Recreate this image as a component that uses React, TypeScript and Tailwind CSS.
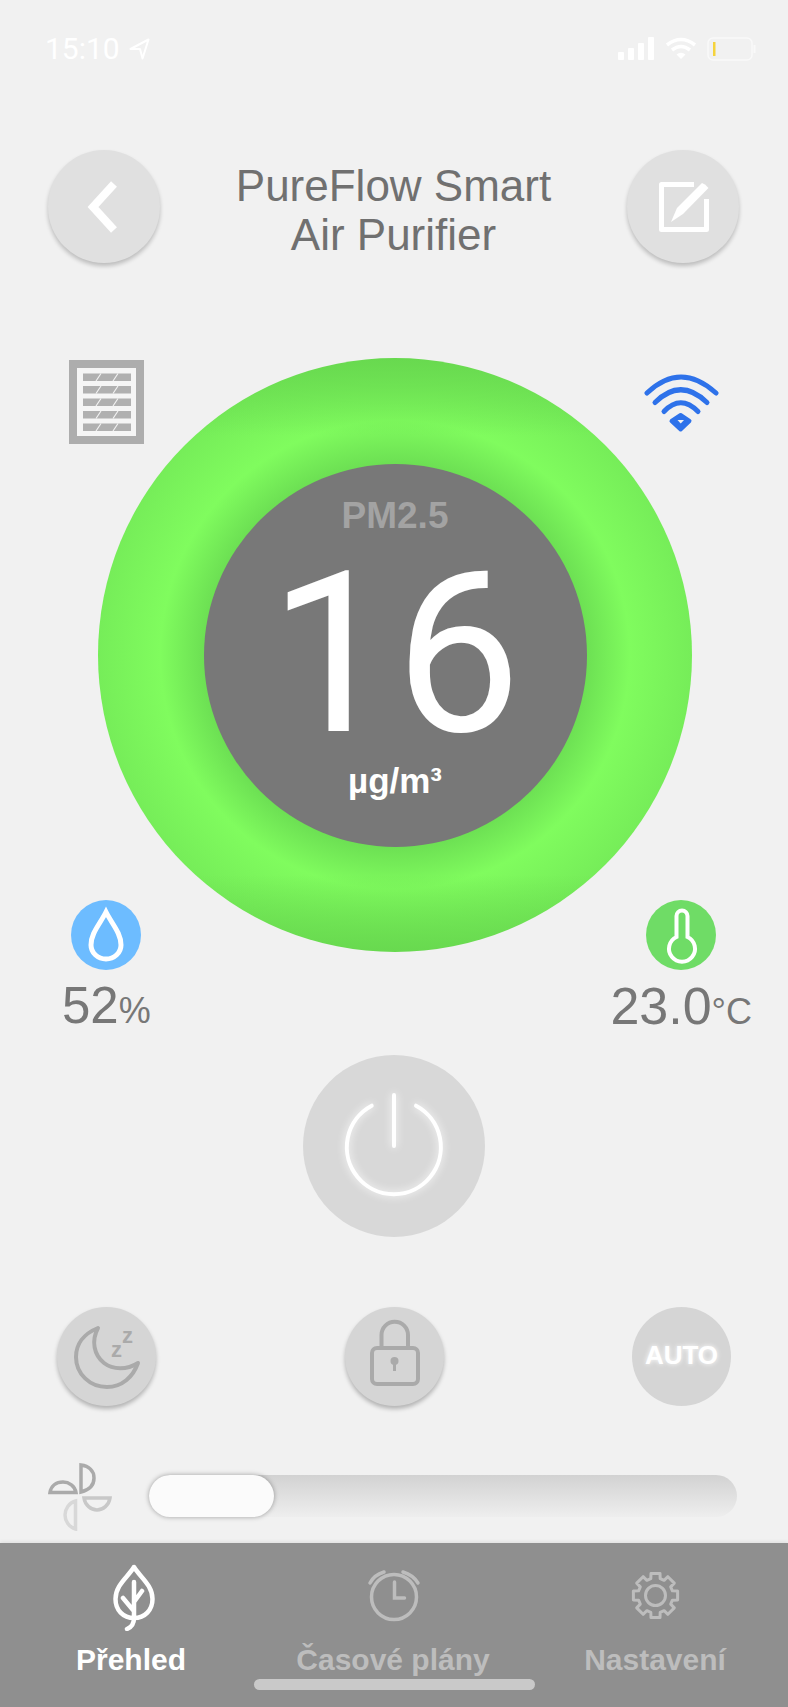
const gearPath = () => {
  const cx = 38.5
  const cy = 40.5
  const pts: string[] = []
  for (let i = 0; i < 8; i++) {
    const a = (i * Math.PI) / 4 - Math.PI / 2
    const step = 0.2
    const gap = 0.27
    const list: [number, number][] = [
      [17.5, a - gap],
      [22.5, a - step],
      [22.5, a + step],
      [17.5, a + gap],
    ]
    list.forEach(([r, t]) => pts.push(`${(cx + r * Math.cos(t)).toFixed(1)} ${(cy + r * Math.sin(t)).toFixed(1)}`))
  }
  return `M${pts.join(' L')} Z`
}

function FilterIcon() {
  const rows = [13.5, 26, 38.5, 51, 63.5]
  return (
    <svg width="75" height="84" viewBox="0 0 75 84">
      <rect x="4" y="4" width="67" height="76" fill="#f5f5f5" stroke="#adadad" strokeWidth="8" />
      {rows.map((y) => (
        <g key={y}>
          <rect x="14" y={y} width="48" height="7.5" fill="#b0b0b0" />
          <path d={`M27 ${y + 7.5} L32 ${y} M44 ${y + 7.5} L49 ${y}`} stroke="#f1f1f1" strokeWidth="1.2" />
        </g>
      ))}
    </svg>
  )
}

function WifiIcon() {
  return (
    <svg width="80" height="62" viewBox="20 22 80 62" fill="none" stroke="#2e72ea" strokeLinecap="round">
      <path d="M27 43 Q60.6 11 96 43" strokeWidth="5" />
      <path d="M35 52.5 Q60.6 27 87 52.5" strokeWidth="5" />
      <path d="M44 61.5 Q60.6 44 78 61.5" strokeWidth="5" />
      <path d="M60.6 65 L69.5 71 L60.6 79.5 L51.5 71 Z" fill="#2e72ea" strokeWidth="4" strokeLinejoin="round" />
      <path d="M57.5 70 H64 L60.7 73.5 Z" fill="#f1f1f1" stroke="none" />
    </svg>
  )
}

function NavLabel({ children, active }: { children: string; active?: boolean }) {
  return (
    <span className={`mt-[11px] block text-[30px] leading-[36px] font-bold ${active ? 'text-white' : 'text-[#bdbdbd]'}`}>
      {children}
    </span>
  )
}

export default function App() {
  return (
    <div className="relative flex h-[1707px] w-full flex-col overflow-hidden bg-[#f1f1f1] font-['Liberation_Sans',sans-serif]">
      {/* status bar */}
      <div className="flex h-[150px] items-start justify-between pt-[34px] pr-[31px] pl-[45px]">
        <div className="flex items-center gap-[9px] font-['Roboto',sans-serif] text-[30px] leading-[30px] text-white">
          <span>15:10</span>
          <svg width="21" height="22" viewBox="0 0 21 22" fill="none" stroke="#fff" strokeWidth="2" strokeLinejoin="round">
            <path d="M1.5 11 L19.5 1.5 L13.5 20.5 L11 11 Z" />
          </svg>
        </div>
        <div className="mt-[3px] flex items-start gap-[11px]">
          <svg width="36" height="23" viewBox="0 0 36 23" fill="#fff">
            <rect x="0" y="15" width="6" height="8" rx="1" />
            <rect x="10" y="11" width="6" height="12" rx="1" />
            <rect x="20" y="6" width="6" height="17" rx="1" />
            <rect x="30" y="0" width="6" height="23" rx="1" />
          </svg>
          <svg width="32" height="23" viewBox="0 0 32 23" fill="none" stroke="#fff" strokeWidth="3.5">
            <path d="M2 8 Q16 -3 30 8" />
            <path d="M7 13 Q16 6 25 13" />
            <path d="M16 22 L11.5 17.5 Q16 14 20.5 17.5 Z" fill="#fff" stroke="none" />
          </svg>
          <svg width="50" height="24" viewBox="0 0 50 24" fill="none" className="ml-[-1px]">
            <rect x="1" y="1" width="44" height="22" rx="5" stroke="#fff" strokeWidth="1.5" strokeOpacity="0.6" />
            <rect x="6" y="5" width="2.5" height="14" fill="#f5d33c" />
            <path d="M47.5 8 V16" stroke="#fff" strokeWidth="2" strokeOpacity="0.6" />
          </svg>
        </div>
      </div>

      {/* header */}
      <div className="flex items-center justify-between pr-[49px] pl-[48px]">
        <button className="flex h-[113px] w-[112px] items-center justify-center rounded-full bg-[#e0e0e0] shadow-[0_3px_4px_rgba(0,0,0,0.22)]">
          <svg width="32" height="52" viewBox="0 0 32 52" fill="none" stroke="#fff" strokeWidth="8" className="mr-[5px]">
            <path d="M28 3 L7 26 L28 49" />
          </svg>
        </button>
        <h1 className="pt-[6px] text-center text-[44px] leading-[49px] font-normal text-[#707070]">
          PureFlow Smart
          <br />
          Air Purifier
        </h1>
        <button className="flex h-[113px] w-[112px] items-center justify-center rounded-full bg-[#e0e0e0] shadow-[0_3px_4px_rgba(0,0,0,0.22)]">
          <svg width="52" height="52" viewBox="0 0 52 52" fill="none" className="ml-[2px]">
            <path d="M36 3.5 H3.5 V48.5 H48.5 V18" stroke="#fff" strokeWidth="5" strokeLinejoin="round" />
            <path d="M13 41 L19 27 L44 2 Q47.5 3 50.5 7 L25 33 Z" fill="#fff" />
          </svg>
        </button>
      </div>

      {/* filter and wifi */}
      <div className="mt-[97px] flex h-[84px] items-start justify-between pr-[68px] pl-[69px]">
        <FilterIcon />
        <div className="mt-[12px]">
          <WifiIcon />
        </div>
      </div>

      {/* gauge */}
      <div className="mt-[-86px] ml-[98px]">
        <div className="flex h-[594px] w-[594px] items-center justify-center rounded-full bg-[linear-gradient(180deg,#68d94f_0%,rgba(104,217,79,0)_13%,rgba(104,217,79,0)_87%,#68d94f_100%),radial-gradient(circle_closest-side,#6cdf53_64%,#80fc5e_79%,#76ed59_100%)]">
          <div className="flex h-[383px] w-[383px] flex-col items-center rounded-full bg-[#787878] pt-[32px]">
            <span className="text-[37px] leading-[40px] font-bold text-[#a3a3a3]">PM2.5</span>
            <span className="mt-[19px] font-['Roboto',sans-serif] text-[224px] leading-[200px] text-white">16</span>
            <span className="mt-[6px] text-[35px] leading-[40px] font-bold text-white">µg/m³</span>
          </div>
        </div>
      </div>

      {/* humidity and temperature */}
      <div className="mt-[-52px] flex items-start justify-between pr-[36px] pl-[62px] text-[#777777]">
        <div className="flex flex-col items-center">
          <div className="flex h-[70px] w-[70px] items-center justify-center rounded-full bg-[#6dbcff]">
            <svg width="70" height="70" viewBox="0 0 70 70" fill="none" stroke="#fff" strokeWidth="5">
              <path d="M35 12 C29 24 20 33 20 45 C20 53 27 59 35 59 C43 59 50 53 50 45 C50 33 41 24 35 12 Z" />
            </svg>
          </div>
          <div className="mt-[6px] text-[51px] leading-[60px]">
            52<span className="text-[36px] leading-none">%</span>
          </div>
        </div>
        <div className="flex flex-col items-center">
          <div className="flex h-[70px] w-[70px] items-center justify-center rounded-full bg-[#6fdc66]">
            <svg width="70" height="70" viewBox="0 0 70 70" fill="none" stroke="#fff" strokeWidth="4">
              <path d="M30.5 37 V16 a5.5 5.5 0 0 1 11 0 V37 A13 13 0 1 1 30.5 37 Z" />
            </svg>
          </div>
          <div className="mt-[6px] text-[52px] leading-[60px]">
            23.0<span className="text-[36px] leading-none">°C</span>
          </div>
        </div>
      </div>

      {/* power */}
      <div className="mt-[19px] flex justify-center">
        <button className="h-[182px] w-[182px] rounded-full bg-[#d8d8d8]">
          <svg width="182" height="182" viewBox="0 0 182 182" fill="none" stroke="#fff" strokeWidth="4" strokeLinecap="round" className="drop-shadow-[0_0_4px_#fff]">
            <path d="M68.7 50.7 A47 47 0 1 0 113 50.7" />
            <path d="M91 40 V91" />
          </svg>
        </button>
      </div>

      {/* mode buttons */}
      <div className="mt-[70px] flex items-start justify-between px-[57px]">
        <button className="h-[99px] w-[99px] rounded-full bg-[#d5d5d5] shadow-[0_3px_4px_rgba(0,0,0,0.26)]">
          <svg width="99" height="99" viewBox="0 0 99 99" fill="none">
            <path
              d="M41 21 C26 27 19 38 19 50 C19 67 33 80 50 80 C65 80 76 70 81 56 C70 63 56 63 47 56 C37 48 34 34 41 21 Z"
              stroke="#aaaaaa"
              strokeWidth="4"
              strokeLinejoin="round"
            />
            <text x="54" y="50" fill="#aaaaaa" fontSize="22" fontWeight="bold">
              z
            </text>
            <text x="65" y="36" fill="#aaaaaa" fontSize="22" fontWeight="bold">
              z
            </text>
          </svg>
        </button>
        <button className="h-[99px] w-[99px] rounded-full bg-[#d5d5d5] shadow-[0_3px_4px_rgba(0,0,0,0.26)]">
          <svg width="99" height="99" viewBox="0 0 99 99" fill="none" stroke="#aaaaaa" strokeWidth="4">
            <rect x="27" y="41" width="46" height="36" rx="5" />
            <path d="M36.5 41 V28 A13 13 0 0 1 63 28 V41" />
            <circle cx="49.5" cy="54" r="4" fill="#aaaaaa" stroke="none" />
            <path d="M49.5 55 V64" strokeWidth="3" />
          </svg>
        </button>
        <button className="flex h-[99px] w-[99px] items-center justify-center rounded-full bg-[#d5d5d5] pb-[2px] text-[26px] font-bold text-white [text-shadow:0_0_5px_#fff]">
          AUTO
        </button>
      </div>

      {/* fan speed */}
      <div className="mt-[57px] flex items-start pl-[48px]">
        <svg width="64" height="68" viewBox="8 8 64 68" fill="none" strokeWidth="3.5">
          <path d="M41 10 V37 C49 35 54 30 54 23 C54 16 49 11 41 10 Z" stroke="#aaaaaa" />
          <path d="M10 37.5 H36 C35 31 29 27 23 27 C16 27 11 31 10 37.5 Z" stroke="#aaaaaa" />
          <path d="M44 43 H70 C69 50 63 55 57 55 C51 55 45 50 44 43 Z" stroke="#c8c8c8" />
          <path d="M35.5 46 V74 C29 72 25 66 25 60 C25 54 29 48 35.5 46 Z" stroke="#d8d8d8" />
        </svg>
        <div className="mt-[12px] ml-[37px] h-[42px] w-[588px] rounded-full bg-[linear-gradient(180deg,#d2d2d2,#eeeeee)]">
          <div className="h-[42px] w-[125px] rounded-[21px] bg-[#fbfbfb] shadow-[0_0_5px_rgba(0,0,0,0.35)]" />
        </div>
      </div>

      {/* tab bar */}
      <nav className="mt-auto grid h-[164px] grid-cols-3 bg-[#8f8f8f] pt-[12px] pr-[2px] text-center shadow-[0_-2px_3px_rgba(0,0,0,0.06)]">
        <div className="flex flex-col items-center">
          <svg width="76" height="76" viewBox="0 0 76 76" fill="none" stroke="#fff" strokeWidth="4.5" strokeLinecap="round" strokeLinejoin="round">
            <path d="M41 12 C35 22 22.5 30 22.5 44 C22.5 55 30 63 41 63 C52 63 59.5 55 59.5 44 C59.5 30 47 22 41 12 Z" />
            <path d="M41 27 V63 C41 68 39 72 34 74 M49 36 L41 47 M30 43 L40 55" />
          </svg>
          <NavLabel active>Přehled</NavLabel>
        </div>
        <div className="flex flex-col items-center">
          <svg width="76" height="76" viewBox="0 0 76 76" fill="none" stroke="#bdbdbd" strokeWidth="3.5" strokeLinecap="round">
            <circle cx="39" cy="42" r="22.5" />
            <path d="M39.5 27 V43 H49.5" />
            <path d="M15 28 Q19 20 29 17 M48 17 Q58 20 63 28" strokeWidth="3.5" />
          </svg>
          <NavLabel>Časové plány</NavLabel>
        </div>
        <div className="flex flex-col items-center">
          <svg width="76" height="76" viewBox="0 0 76 76" fill="none" stroke="#bdbdbd" strokeWidth="3" strokeLinejoin="round">
            <path d={gearPath()} />
            <circle cx="38.5" cy="40.5" r="10" />
          </svg>
          <NavLabel>Nastavení</NavLabel>
        </div>
      </nav>

      {/* home indicator over the tab bar */}
      <div className="absolute bottom-[17px] left-[254px] h-[11px] w-[281px] rounded-full bg-[#c9c9c9]" />
    </div>
  )
}
